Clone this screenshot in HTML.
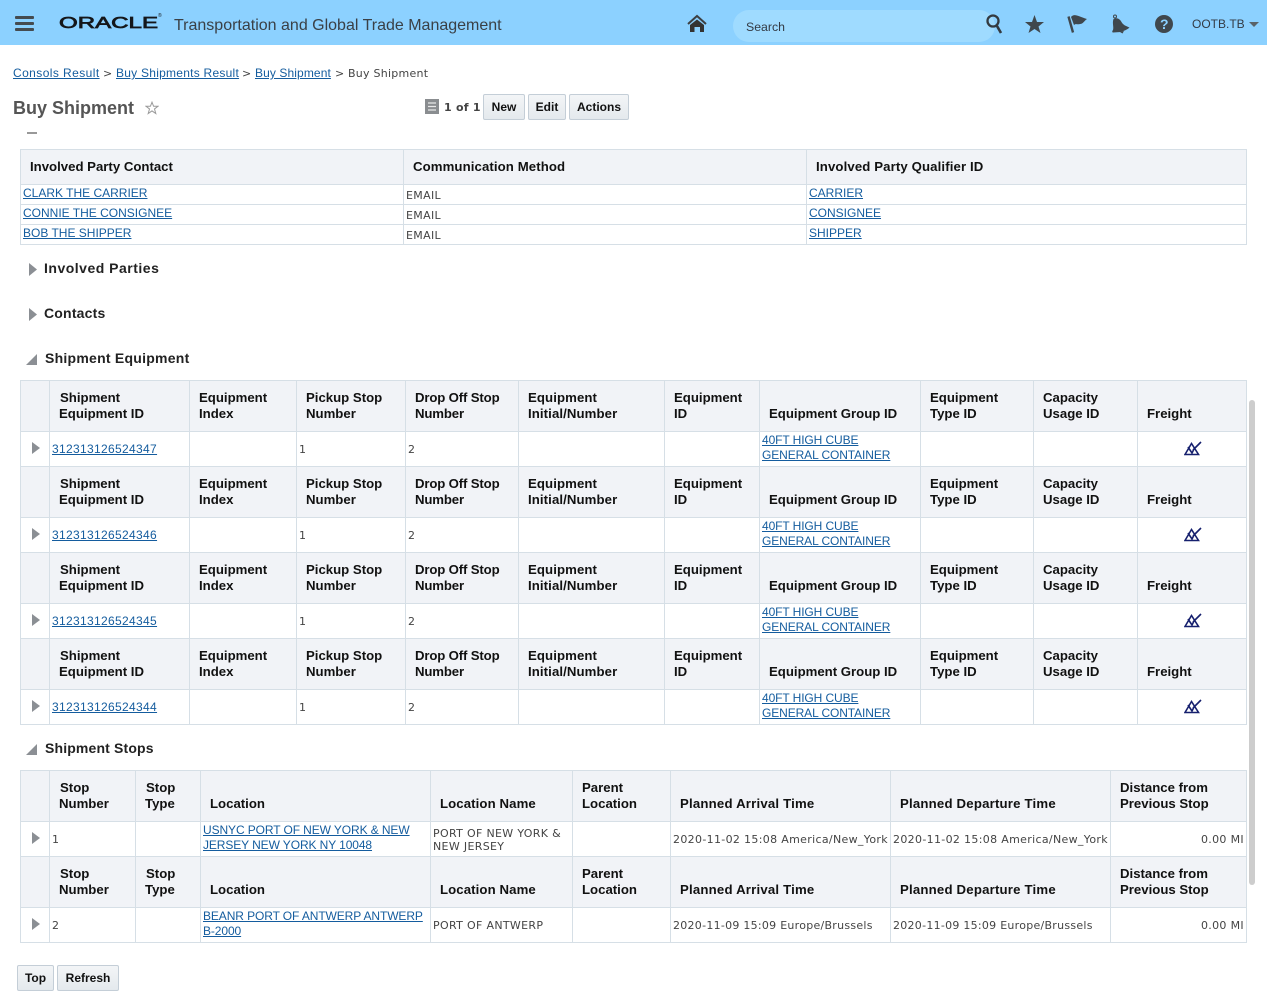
<!DOCTYPE html>
<html lang="en"><head><meta charset="utf-8"><title>Buy Shipment</title>
<style>
html,body{margin:0;padding:0;width:1267px;height:996px;overflow:hidden;background:#fff;font-family:"Liberation Sans",sans-serif;color:#333}
.a{position:absolute;white-space:nowrap}
a{color:#145c9e;text-decoration:underline}
#top{position:absolute;left:0;top:0;width:1267px;height:45px;background:#8cd1ff}
#search{position:absolute;left:733px;top:10px;width:262px;height:32px;border-radius:16px;background:#9fdbff}
.btn{position:absolute;box-sizing:border-box;height:26px;line-height:24px;text-align:center;font-size:12px;font-weight:bold;color:#111;border:1px solid #c4ced7;border-radius:2px;background:linear-gradient(#f3f5f7,#e4e9ed)}
.sec{position:absolute;font-size:14px;font-weight:bold;letter-spacing:.25px;color:#222;line-height:16px;white-space:nowrap}
table{position:absolute;left:20px;width:1226px;border-collapse:collapse;table-layout:fixed;border:1px solid #d6dfe6}
td,th{border:1px solid #d6dfe6;padding:0;overflow:visible}
th{background:#f1f3f7;font-size:13.2px;line-height:16px;font-weight:bold;color:#111;text-align:left;vertical-align:bottom;padding:0 0 9px 9px}
th.i{text-indent:1px}
th.p{letter-spacing:.2px}
th.q{letter-spacing:.12px}
th.o{letter-spacing:-.15px}
th.e{letter-spacing:.1px}
td{font-family:"DejaVu Sans",sans-serif;font-size:11px;letter-spacing:.33px;line-height:13px;color:#444;padding:0 2px;vertical-align:middle;white-space:nowrap}
td.b{letter-spacing:.27px}
td a{font-family:"Liberation Sans",sans-serif;font-size:12px;letter-spacing:0;line-height:15px}
tr.h{height:51px}tr.d{height:35px}
td.t{padding:0;position:relative}
td.t i{position:absolute;left:11px;top:10px;width:0;height:0;border-left:8px solid #8b8f94;border-top:6.5px solid transparent;border-bottom:6.5px solid transparent}
td.r{text-align:right}
td.l{white-space:normal}
td.l a{position:relative;top:-1px}
td.l a.c{letter-spacing:-.1px}
td.l span{position:relative;top:1px}
td a.n{letter-spacing:.33px}
#t1 th{vertical-align:middle;padding:0 0 0 9px}
#t1 td{vertical-align:bottom;padding-bottom:2px}
#t1 td a{position:relative;top:-1px}
#t1 tr{height:20px}
#t1 tr.hh{height:35px}
.f{display:block;margin:0 auto 0 44px;position:relative;top:-1px}
</style></head><body>
<div id="top"></div>
<div id="search"></div>
<svg class="a" style="left:0;top:0" width="1267" height="45" viewBox="0 0 1267 45">
<g fill="#444b50"><rect x="15" y="16" width="19" height="3" rx="1"/><rect x="15" y="22" width="19" height="3" rx="1"/><rect x="15" y="28" width="19" height="3" rx="1"/></g>
<text x="59" y="28.2" font-family="Liberation Sans" font-size="16" textLength="99" lengthAdjust="spacingAndGlyphs" fill="#14171a" stroke="#14171a" stroke-width=".7">ORACLE</text>
<path d="M688 24 L697 16 L706 24" fill="none" stroke="#3c3f42" stroke-width="2"/>
<path d="M697 19.500 L704 25 V32 H700 V27 H694.500 V32 H690 V25 Z" fill="#333"/>
<circle cx="993" cy="21" r="5.500" fill="none" stroke="#333a40" stroke-width="2.300"/>
<path d="M997 26 L1001 33" stroke="#333a40" stroke-width="2.600"/>
<path d="M1034.500 15 L1037 22 H1044 L1038.500 26.500 L1040.500 33 L1034.500 29 L1028.500 33 L1030.500 26.500 L1025 22 H1032 Z" fill="#3f474d"/>
<path d="M1068.500 16.500 L1073 32.500" stroke="#3f474d" stroke-width="2.400"/>
<path d="M1071 17 C1074 13 1078 16 1087 19 C1084 21 1083 24 1080 24 C1077 25 1076 23 1074 25 Z" fill="#3f474d"/>
<path d="M1113.500 19 C1117 17 1120 19 1121.500 22 C1123 25 1126 26 1129.500 27.500 C1127 30 1123 31 1121 32 L1113 32.500 C1112 32.500 1112 31 1113 30 C1114 27 1112 23 1113.500 19 Z" fill="#3f474d"/>
<circle cx="1115" cy="16.500" r="1.500" fill="none" stroke="#3f474d"/>
<path d="M1120 32 L1124 31 L1122.500 33.500 Z" fill="#3f474d"/>
<circle cx="1164" cy="24" r="9" fill="#3f474d"/>
<path d="M1249 22 H1259 L1254 27 Z" fill="#5a6268"/>
</svg>
<div class="a" style="left:158px;top:13px;font-size:5px;line-height:6px;color:#14171a">®</div>
<div class="a" style="left:1160px;top:16px;font-size:14px;font-weight:bold;line-height:16px;color:#8cd1ff">?</div>
<div class="a" style="left:174px;top:16px;font-size:16px;line-height:19px;color:#3a4046">Transportation and Global Trade Management</div>
<div class="a" style="left:746px;top:20px;font-size:12.3px;line-height:14px;color:#333a44">Search</div>
<div class="a" style="left:1192px;top:17px;font-size:12px;line-height:14px;color:#333a44">OOTB.TB</div>

<div class="a" style="left:13px;top:66px;font-size:12px;line-height:14px;letter-spacing:.42px"><a href="#">Consols Result</a></div>
<div class="a" style="left:116px;top:66px;font-size:12px;line-height:14px;letter-spacing:.25px"><a href="#">Buy Shipments Result</a></div>
<div class="a" style="left:255px;top:66px;font-size:12px;line-height:14px;letter-spacing:.1px"><a href="#">Buy Shipment</a></div>
<div class="a" style="left:103px;top:67px;font:11px/14px 'DejaVu Sans',sans-serif;color:#444">&gt;</div>
<div class="a" style="left:242px;top:67px;font:11px/14px 'DejaVu Sans',sans-serif;color:#444">&gt;</div>
<div class="a" style="left:335px;top:67px;font:11px/14px 'DejaVu Sans',sans-serif;color:#444">&gt;</div>
<div class="a" style="left:348px;top:67px;font:11px/14px 'DejaVu Sans',sans-serif;letter-spacing:.25px;color:#444">Buy Shipment</div>
<div class="a" style="left:13px;top:98px;font-size:18px;font-weight:bold;line-height:21px;color:#555">Buy Shipment</div>
<svg class="a" style="left:145px;top:101px" width="14" height="14" viewBox="0 0 14 14"><path d="M7 1.200 L8.600 5.300 H13 L9.500 8 L10.800 12.500 L7 9.900 L3.200 12.500 L4.500 8 L1 5.300 H5.400 Z" fill="none" stroke="#9a9a9a"/></svg>
<svg class="a" style="left:425px;top:99px" width="14" height="15" viewBox="0 0 14 15"><rect width="14" height="15" fill="#8a8d90"/><path d="M3 4H11M3 7.500H11M3 11H11" stroke="#e8e8e8" stroke-width="1.300"/></svg>
<div class="a" style="left:444px;top:101px;font:bold 11px/14px 'DejaVu Sans',sans-serif;letter-spacing:.25px;color:#444">1 of 1</div>
<div class="btn" style="left:483px;top:94px;width:42px">New</div>
<div class="btn" style="left:528px;top:94px;width:38px">Edit</div>
<div class="btn" style="left:569px;top:94px;width:60px">Actions</div>
<div class="a" style="left:27px;top:132px;width:10px;height:2px;background:#999"></div>

<table id="t1" style="top:149px"><colgroup><col style="width:383px"><col style="width:403px"><col style="width:440px"></colgroup>
<tr class="hh"><th>Involved Party Contact</th><th class="e">Communication Method</th><th class="q">Involved Party Qualifier ID</th></tr>
<tr><td><a href="#">CLARK THE CARRIER</a></td><td>EMAIL</td><td><a href="#">CARRIER</a></td></tr>
<tr><td><a href="#">CONNIE THE CONSIGNEE</a></td><td>EMAIL</td><td><a href="#">CONSIGNEE</a></td></tr>
<tr><td><a href="#">BOB THE SHIPPER</a></td><td>EMAIL</td><td><a href="#">SHIPPER</a></td></tr>
</table>

<svg class="a" style="left:0;top:250px" width="45" height="510" viewBox="0 250 45 510"><g fill="#8b8f94"><path d="M29 263 L37 269.500 L29 276Z"/><path d="M29 308 L37 314.500 L29 321Z"/><path d="M26 365 L37 354 V365Z"/><path d="M26 755 L37 744 V755Z"/></g></svg>
<div class="sec" style="left:44px;top:260px;letter-spacing:.5px">Involved Parties</div>
<div class="sec" style="left:44px;top:305px;letter-spacing:.2px">Contacts</div>
<div class="sec" style="left:45px;top:350px">Shipment Equipment</div>

<table style="top:380px"><colgroup><col style="width:29px"><col style="width:140px"><col style="width:107px"><col style="width:109px"><col style="width:113px"><col style="width:146px"><col style="width:95px"><col style="width:161px"><col style="width:113px"><col style="width:104px"><col style="width:109px"></colgroup>
<tr class="h"><th></th><th class="i">Shipment<br>Equipment ID</th><th>Equipment<br>Index</th><th>Pickup Stop<br>Number</th><th class="o">Drop Off Stop<br>Number</th><th class="e">Equipment<br>Initial/Number</th><th>Equipment<br>ID</th><th>Equipment Group ID</th><th>Equipment<br>Type ID</th><th>Capacity<br>Usage ID</th><th>Freight</th></tr>
<tr class="d"><td class="t"><i></i></td><td><a class="n" href="#">312313126524347</a></td><td></td><td>1</td><td>2</td><td></td><td></td><td class="l"><a class="c" href="#">40FT HIGH CUBE<br>GENERAL CONTAINER</a></td><td></td><td></td><td><svg class="f" width="18" height="15" viewBox="0 0 18 15"><path d="M1 13.500 L7.500 2.500 L14.500 13.500 Z M4 6 L8 12 L10 8 M9 9 L17 1" fill="none" stroke="#16206e" stroke-width="1.600"/></svg></td></tr>
<tr class="h"><th></th><th class="i">Shipment<br>Equipment ID</th><th>Equipment<br>Index</th><th>Pickup Stop<br>Number</th><th class="o">Drop Off Stop<br>Number</th><th class="e">Equipment<br>Initial/Number</th><th>Equipment<br>ID</th><th>Equipment Group ID</th><th>Equipment<br>Type ID</th><th>Capacity<br>Usage ID</th><th>Freight</th></tr>
<tr class="d"><td class="t"><i></i></td><td><a class="n" href="#">312313126524346</a></td><td></td><td>1</td><td>2</td><td></td><td></td><td class="l"><a class="c" href="#">40FT HIGH CUBE<br>GENERAL CONTAINER</a></td><td></td><td></td><td><svg class="f" width="18" height="15" viewBox="0 0 18 15"><path d="M1 13.500 L7.500 2.500 L14.500 13.500 Z M4 6 L8 12 L10 8 M9 9 L17 1" fill="none" stroke="#16206e" stroke-width="1.600"/></svg></td></tr>
<tr class="h"><th></th><th class="i">Shipment<br>Equipment ID</th><th>Equipment<br>Index</th><th>Pickup Stop<br>Number</th><th class="o">Drop Off Stop<br>Number</th><th class="e">Equipment<br>Initial/Number</th><th>Equipment<br>ID</th><th>Equipment Group ID</th><th>Equipment<br>Type ID</th><th>Capacity<br>Usage ID</th><th>Freight</th></tr>
<tr class="d"><td class="t"><i></i></td><td><a class="n" href="#">312313126524345</a></td><td></td><td>1</td><td>2</td><td></td><td></td><td class="l"><a class="c" href="#">40FT HIGH CUBE<br>GENERAL CONTAINER</a></td><td></td><td></td><td><svg class="f" width="18" height="15" viewBox="0 0 18 15"><path d="M1 13.500 L7.500 2.500 L14.500 13.500 Z M4 6 L8 12 L10 8 M9 9 L17 1" fill="none" stroke="#16206e" stroke-width="1.600"/></svg></td></tr>
<tr class="h"><th></th><th class="i">Shipment<br>Equipment ID</th><th>Equipment<br>Index</th><th>Pickup Stop<br>Number</th><th class="o">Drop Off Stop<br>Number</th><th class="e">Equipment<br>Initial/Number</th><th>Equipment<br>ID</th><th>Equipment Group ID</th><th>Equipment<br>Type ID</th><th>Capacity<br>Usage ID</th><th>Freight</th></tr>
<tr class="d"><td class="t"><i></i></td><td><a class="n" href="#">312313126524344</a></td><td></td><td>1</td><td>2</td><td></td><td></td><td class="l"><a class="c" href="#">40FT HIGH CUBE<br>GENERAL CONTAINER</a></td><td></td><td></td><td><svg class="f" width="18" height="15" viewBox="0 0 18 15"><path d="M1 13.500 L7.500 2.500 L14.500 13.500 Z M4 6 L8 12 L10 8 M9 9 L17 1" fill="none" stroke="#16206e" stroke-width="1.600"/></svg></td></tr>
</table>

<div class="sec" style="left:45px;top:740px;letter-spacing:.15px">Shipment Stops</div>

<table style="top:770px"><colgroup><col style="width:29px"><col style="width:86px"><col style="width:65px"><col style="width:230px"><col style="width:142px"><col style="width:98px"><col style="width:220px"><col style="width:220px"><col style="width:136px"></colgroup>
<tr class="h"><th></th><th class="i">Stop<br>Number</th><th class="i">Stop<br>Type</th><th>Location</th><th class="e">Location Name</th><th>Parent<br>Location</th><th class="p">Planned Arrival Time</th><th class="p">Planned Departure Time</th><th>Distance from<br>Previous Stop</th></tr>
<tr class="d"><td class="t"><i></i></td><td>1</td><td></td><td class="l"><a class="c" href="#">USNYC PORT OF NEW YORK &amp; NEW<br>JERSEY NEW YORK NY 10048</a></td><td class="l"><span>PORT OF NEW YORK &amp;<br>NEW JERSEY</span></td><td></td><td>2020-11-02 15:08 America/New_York</td><td>2020-11-02 15:08 America/New_York</td><td class="r">0.00 MI</td></tr>
<tr class="h"><th></th><th class="i">Stop<br>Number</th><th class="i">Stop<br>Type</th><th>Location</th><th class="e">Location Name</th><th>Parent<br>Location</th><th class="p">Planned Arrival Time</th><th class="p">Planned Departure Time</th><th>Distance from<br>Previous Stop</th></tr>
<tr class="d"><td class="t"><i></i></td><td>2</td><td></td><td class="l"><a class="c" href="#">BEANR PORT OF ANTWERP ANTWERP<br>B-2000</a></td><td>PORT OF ANTWERP</td><td></td><td class="b">2020-11-09 15:09 Europe/Brussels</td><td class="b">2020-11-09 15:09 Europe/Brussels</td><td class="r">0.00 MI</td></tr>
</table>

<div class="a" style="left:1249px;top:400px;width:6px;height:485px;border-radius:3px;background:#cdcdcd"></div>
<div class="btn" style="left:17px;top:965px;width:37px">Top</div>
<div class="btn" style="left:57px;top:965px;width:62px">Refresh</div>
</body></html>
